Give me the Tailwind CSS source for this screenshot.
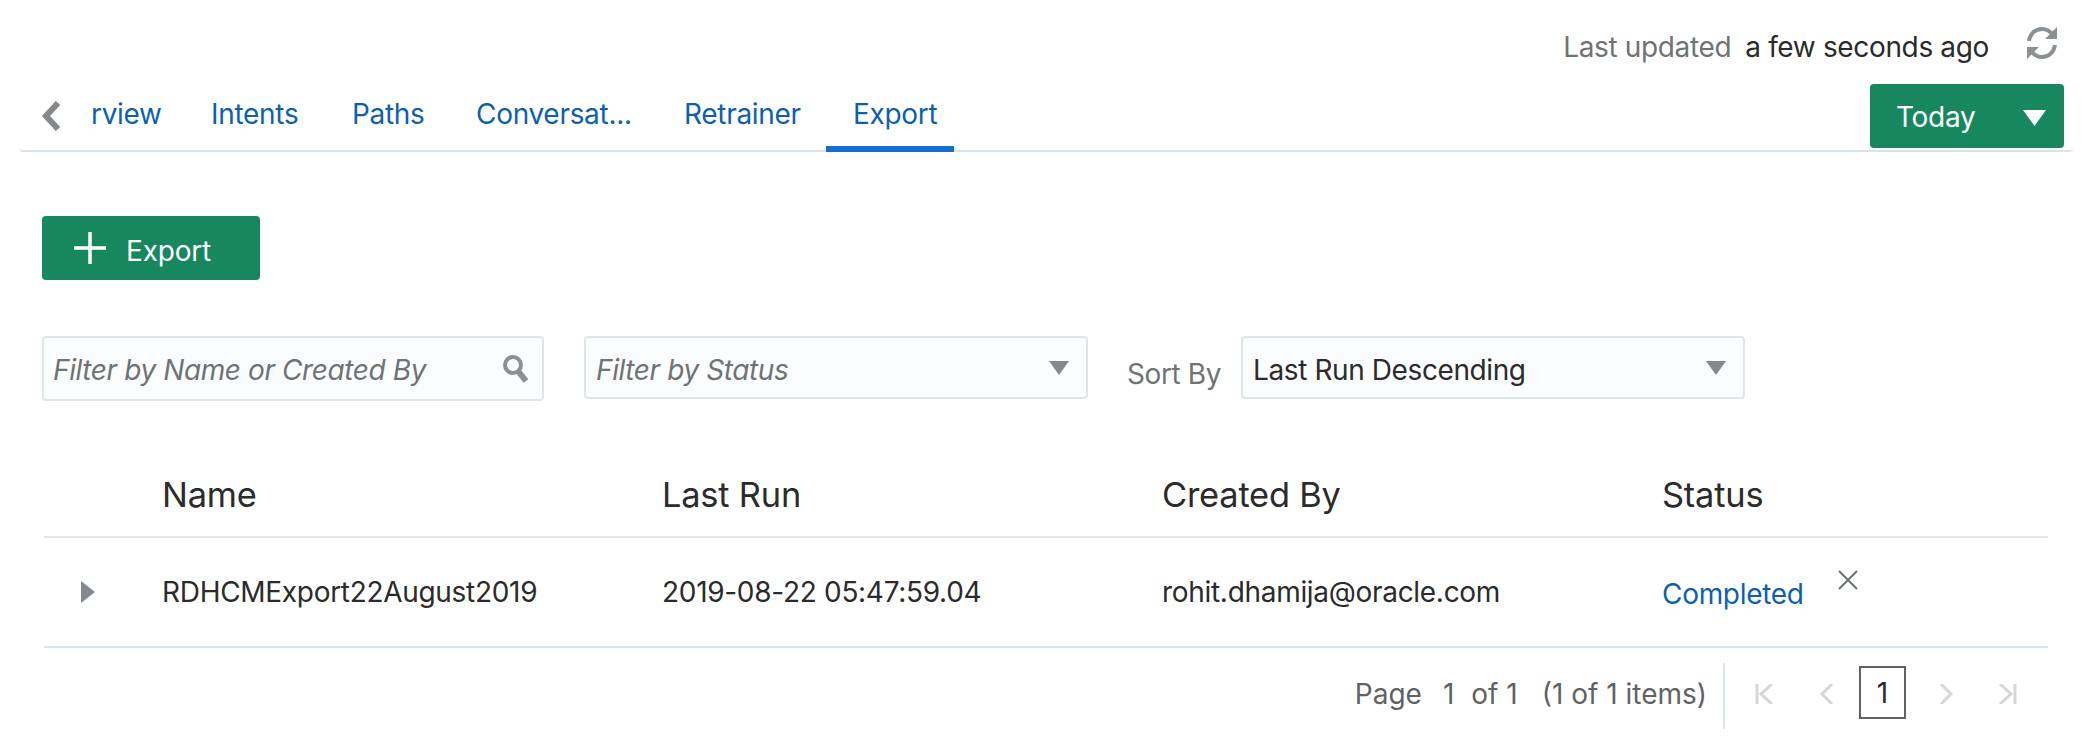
<!DOCTYPE html>
<html lang="en">
<head>
<meta charset="UTF-8">
<title>Export</title>
<script src="https://cdn.jsdelivr.net/npm/@tailwindcss/browser@4"></script>
</head>
<body class="bg-white font-['Inter',sans-serif] text-[#2b2b2b]">
<div class="w-[2096px] h-[744px] overflow-hidden">

  <!-- last updated -->
  <div class="flex items-center justify-end h-[84px] pt-[10px] pr-[37px] text-[28px] leading-[38px] tracking-[-0.35px]">
    <span class="text-[#6f7374]">Last updated</span>
    <span class="ml-[14px]">a few seconds ago</span>
    <svg class="ml-[36px] mb-[8px]" width="34" height="36" viewBox="0 0 34 36" fill="none" stroke="#8b9094" stroke-width="4">
      <path d="M4 16C5 9 10 4 17 4c5 0 8 2 11 6"/>
      <path d="M30 20c-1 7-6 12-13 12-5 0-8-2-11-6"/>
      <path d="M32 2v12H20z" fill="#8b9094" stroke="none"/>
      <path d="M2 34V22h12z" fill="#8b9094" stroke="none"/>
    </svg>
  </div>

  <!-- tabs -->
  <div class="flex items-end justify-between h-[68px] ml-[19px] mr-[23px] border-b-2 border-[#d9e3ec] rounded-b-[4px]">
    <div class="flex items-center h-[68px] pb-[5px] text-[28px] text-[#0f5fb0] tracking-[-0.3px]">
      <svg class="ml-[22px] mr-[30px] mt-[4px]" width="20" height="30" viewBox="0 0 20 30" fill="none" stroke="#85898d" stroke-width="6"><path d="M17 2 5 15l12 13"/></svg>
      <span class="w-[120px]">rview</span>
      <span class="w-[141px]">Intents</span>
      <span class="w-[124px]">Paths</span>
      <span class="w-[208px]">Conversat...</span>
      <span class="w-[169px]">Retrainer</span>
      <div class="relative">
        <span>Export</span>
        <div class="absolute left-[-27px] bottom-[-17px] w-[128px] h-[6px] bg-[#1470cc]"></div>
      </div>
    </div>
    <div class="flex items-center justify-between w-[194px] h-[64px] mb-[2px] mr-[9px] pl-[26px] pr-[18px] bg-[#178760] rounded-[4px] text-white text-[28px] tracking-[-0.3px]">
      <span class="pt-[2px]">Today</span>
      <svg class="mt-[4px]" width="23" height="16" viewBox="0 0 23 16" fill="#fff"><path d="M0 0h23L11.5 16z"/></svg>
    </div>
  </div>

  <!-- toolbar -->
  <div class="pl-[42px] pt-[64px]">
    <div class="flex items-center w-[218px] h-[64px] pl-[31px] bg-[#178760] rounded-[4px] text-white text-[28px] tracking-[-0.2px]">
      <svg width="34" height="34" viewBox="0 0 34 34" stroke="#fff" stroke-width="3.5"><path d="M17 1v32M1 17h32"/></svg>
      <span class="ml-[19px] pt-[5px]">Export</span>
    </div>

    <!-- filters -->
    <div class="flex items-start mt-[56px] text-[28px] tracking-[-0.4px]">
      <div class="flex items-center justify-between w-[502px] h-[65px] pl-[9px] pr-[12px] bg-[#fbfcfd] border-2 border-[#dfe6e8] rounded-[4px]">
        <span class="italic text-[#6f7374] pt-[3px]">Filter by Name or Created By</span>
        <svg width="28" height="30" viewBox="0 0 28 30" fill="none" stroke="#8b9094"><circle cx="11" cy="11" r="8" stroke-width="4"/><path d="M16 17l8 10" stroke-width="6"/></svg>
      </div>
      <div class="flex items-center justify-between w-[504px] h-[63px] ml-[40px] pl-[10px] pr-[17px] bg-[#fbfcfd] border-2 border-[#dfe6e8] rounded-[4px]">
        <span class="italic text-[#6f7374] pt-[4px]">Filter by Status</span>
        <svg width="20" height="14" viewBox="0 0 20 14" fill="#85898d"><path d="M0 0h20L10 14z"/></svg>
      </div>
      <span class="ml-[39px] mt-[17px] text-[#6f7374]">Sort By</span>
      <div class="flex items-center justify-between w-[504px] h-[63px] ml-[20px] pl-[10px] pr-[17px] bg-[#fbfcfd] border-2 border-[#dfe6e8] rounded-[4px]">
        <span class="pt-[4px]">Last Run Descending</span>
        <svg width="20" height="14" viewBox="0 0 20 14" fill="#85898d"><path d="M0 0h20L10 14z"/></svg>
      </div>
    </div>
  </div>

  <!-- table -->
  <div class="ml-[44px] mr-[48px] mt-[43px]">
    <div class="grid grid-cols-[118px_500px_500px_500px_1fr] items-center h-[94px] pt-[10px] border-b-2 border-[#dfe6e8] text-[34.4px] tracking-[-0.2px]">
      <span></span>
      <span>Name</span>
      <span>Last Run</span>
      <span>Created By</span>
      <span>Status</span>
    </div>
    <div class="grid grid-cols-[118px_500px_500px_500px_1fr] items-center h-[110px] border-b-2 border-[#d9e3ec] text-[28px] tracking-[-0.3px]">
      <svg class="ml-[37px]" width="14" height="22" viewBox="0 0 14 22" fill="#85898d"><path d="M0 0l14 11L0 22z"/></svg>
      <span>RDHCMExport22August2019</span>
      <span>2019-08-22 05:47:59.04</span>
      <span>rohit.dhamija@oracle.com</span>
      <div class="flex items-center">
        <span class="text-[#0f5fb0] pt-[3px]">Completed</span>
        <svg class="ml-[33px] mb-[24px]" width="22" height="20" viewBox="0 0 22 20" fill="none" stroke="#6f7374" stroke-width="2"><path d="M2 1l18 18M20 1L2 19"/></svg>
      </div>
    </div>
  </div>

  <!-- pagination -->
  <div class="flex items-center justify-end h-[68px] mt-[14px] pb-[4px] pr-[79px] text-[28px] text-[#5f6364]">
    <span>Page</span>
    <span class="ml-[21px]">1</span>
    <span class="ml-[17px]">of 1</span>
    <span class="ml-[24px]">(1 of 1 items)</span>
    <div class="w-[2px] h-[66px] ml-[16px] mt-[4px] bg-[#d9e3ec]"></div>
    <svg class="ml-[30px]" width="20" height="20" viewBox="0 0 20 20" fill="none" stroke="#d4d6d8" stroke-width="3"><path d="M2 0v20M17 0 6 10l11 10"/></svg>
    <svg class="ml-[45px]" width="14" height="20" viewBox="0 0 14 20" fill="none" stroke="#d4d6d8" stroke-width="3"><path d="M12 0 2 10l10 10"/></svg>
    <div class="flex items-center justify-center w-[47px] h-[53px] ml-[25px] mb-[3px] border-2 border-[#5f6364] text-[#2b2b2b]">1</div>
    <svg class="ml-[33px]" width="14" height="20" viewBox="0 0 14 20" fill="none" stroke="#d4d6d8" stroke-width="3"><path d="M2 0l10 10L2 20"/></svg>
    <svg class="ml-[44px]" width="20" height="20" viewBox="0 0 20 20" fill="none" stroke="#d4d6d8" stroke-width="3"><path d="M18 0v20M3 0l11 10L3 20"/></svg>
  </div>
</div>
</body>
</html>
